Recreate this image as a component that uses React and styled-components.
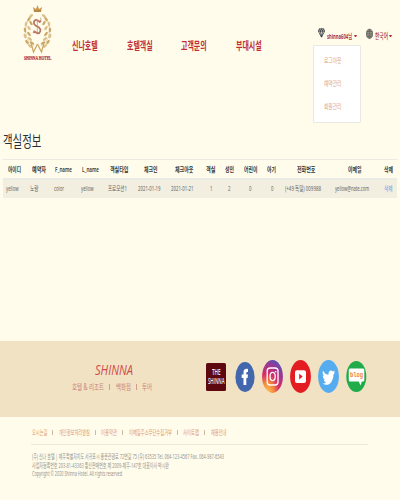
import React, { useLayoutEffect, useRef, useState } from 'react';
import styled, { createGlobalStyle } from 'styled-components';

const GlobalStyle = createGlobalStyle`
  * { box-sizing: border-box; }
  html, body { margin: 0; background: #fffcec; }
  body { font-family: "Noto Sans", "Noto Sans CJK KR", sans-serif; }
`;

const Page = styled.div`
  width: 400px;
  height: 500px;
  overflow: hidden;
  display: flex;
  flex-direction: column;
  background: #fffcec;
`;

/* A label condensed to an exact width. */
const LabelBox = styled.span`
  display: block;
  flex: none;
  width: ${(p) => p.$w}px;
  margin-left: ${(p) => p.$gap || 0}px;
  height: ${(p) => p.$line || p.$size * 1.4}px;
  line-height: ${(p) => p.$line || p.$size * 1.4}px;
  font-size: ${(p) => p.$size}px;
  font-weight: ${(p) => p.$weight || 400};
  color: ${(p) => p.$color || 'inherit'};
  white-space: nowrap;
`;
const LabelText = styled.span`
  display: inline-block;
  transform-origin: 0 50%;
`;

function Label({ w, gap, size, line, weight, color, className, children }) {
  const ref = useRef(null);
  const [scale, setScale] = useState(1);
  useLayoutEffect(() => {
    setScale(w / ref.current.getBoundingClientRect().width);
  }, []);
  return (
    <LabelBox className={className} $w={w} $gap={gap} $size={size} $line={line} $weight={weight} $color={color}>
      <LabelText ref={ref} style={{ transform: `scaleX(${scale})` }}>{children}</LabelText>
    </LabelBox>
  );
}

const Header = styled.header`
  display: flex;
  align-items: flex-start;
  height: 127px;
  flex: none;
`;
const Brand = styled.div`
  width: 51px;
  padding: 4px 0 0 22px;
  display: flex;
  flex-direction: column;
`;
const Crest = styled.svg`
  display: block;
  width: 31px;
  height: 50px;
`;
const BrandName = styled(Label)`
  font-family: "Liberation Serif", serif;
  margin-top: 1px;
  -webkit-text-stroke: 0.2px #ad3040;
`;
const Nav = styled.nav`
  display: flex;
  gap: 29px;
  padding: 38px 0 0 21px;
`;
const Account = styled.div`
  position: relative;
  display: flex;
  align-items: flex-start;
  margin-left: 56px;
  padding-top: 28px;
  color: #a8343c;
`;
const Glyph = styled.svg`
  display: block;
  flex: none;
  width: ${(p) => p.$w}px;
  height: ${(p) => p.$h}px;
  margin-left: ${(p) => p.$gap || 0}px;
`;
const AccountLabel = styled(Label)`
  margin-top: 4px;
`;
const Caret = styled.i`
  width: 3px;
  margin: 7px 0 0 ${(p) => p.$gap}px;
  border: 1.5px solid transparent;
  border-top: 2px solid #b52833;
`;
const Menu = styled.div`
  position: absolute;
  top: 45px;
  left: -5px;
  width: 48px;
  height: 78px;
  padding: 11px 0 0 10px;
  display: flex;
  flex-direction: column;
  gap: 14.2px;
  background: #fff;
  border: 1px solid #e9e8e1;
  border-radius: 1px;
`;

const Title = styled.h1`
  margin: 0;
  height: 32px;
  padding: 3px 0 0 3px;
  flex: none;
`;
const Table = styled.div`
  margin: 0 3px;
  border-top: 1px solid #ecebe3;
`;
const Row = styled.div`
  display: grid;
  grid-template-columns: 23px 25px 26px 27px 31px 33px 33px 19px 20px 22px 19px 47px 51px 18px;
  align-items: center;
  height: ${(p) => (p.$head ? 20 : 18)}px;
  color: ${(p) => (p.$head ? '#33373b' : '#686866')};
  background: ${(p) => (p.$head ? 'transparent' : '#f2eee0')};
  border-bottom: ${(p) => (p.$head ? '2px solid #ebebe5' : '0')};
`;

const Band = styled.section`
  margin-top: 143px;
  height: 76px;
  flex: none;
  display: flex;
  background: #f2e2c4;
`;
const Group = styled.div`
  width: 206px;
  padding: 18px 0 0 72px;
`;
const Script = styled(Label)`
  font-family: "Open Sans", sans-serif;
  font-style: italic;
`;
const Links = styled.div`
  display: flex;
  align-items: center;
  margin-top: ${(p) => p.$top}px;
`;
const Rule = styled.i`
  width: 1px;
  height: ${(p) => p.$h}px;
  margin-left: 5px;
  background: ${(p) => p.$color};
`;
const Socials = styled.div`
  display: flex;
  align-items: center;
  height: 71px;
`;
const Tile = styled.div`
  width: 20px;
  height: 28px;
  padding: 4px 0 0 2px;
  border-radius: 1.5px;
  background: #5d0810;
  color: #f4e8e7;
`;
const TileLabel = styled(Label)`
  font-family: "Open Sans", sans-serif;
`;

const Footer = styled.footer`
  padding: 11px 0 0 31px;
`;
const Divider = styled.hr`
  width: 337px;
  height: 1px;
  margin: 7px 0 8.3px;
  border: 0;
  background: #eceadf;
`;
const Notice = styled.div`
  display: flex;
  flex-direction: column;
`;

const leaves = [
  [7, 15, 35], [4, 20, 10], [3, 26, -5], [3, 32, -20], [5, 38, -35], [8, 42, -50],
  [9, 19, -30], [7, 24, -35], [7, 30, -40], [8, 35, -50], [10, 39, -60], [9, 12, 50],
];

function Wreath() {
  return (
    <g>
      <path d="M9 12C4 17 3 24 4 30C5 37 9 40 12 42" fill="none" stroke="#d6b87e" strokeWidth=".6" />
      {leaves.map(([x, y, a], i) => (
        <ellipse key={i} cx={x} cy={y} rx="1.25" ry="2.5" fill={i % 2 ? '#dcc18d' : '#cda968'} transform={`rotate(${a} ${x} ${y})`} />
      ))}
      <path d="M9 39L11.5 48L15.5 40" fill="none" stroke="#cba564" strokeWidth="1.2" />
    </g>
  );
}

const headCells = [
  ['아이디', 5, 13], ['예약자', 5.5, 14], ['F_name', 4, 17], ['L_name', 4.5, 17], ['객실타입', 5.5, 18.5],
  ['체크인', 9, 13.5], ['체크아웃', 7, 18.5], ['객실', 5, 9.5], ['성인', 5, 9], ['어린이', 4, 13.5],
  ['아기', 5, 9], ['전화번호', 16, 18.5], ['이메일', 20, 13.5], ['삭제', 4.5, 9],
];
const bodyCells = [
  ['yellow', 3, 12.5], ['노랑', 4, 8.5], ['color', 3, 10], ['yellow', 3.5, 12.5], ['프로모션1', 3.5, 19],
  ['2021-01-19', 2.5, 22.5], ['2021-01-21', 3, 22.5], ['1', 8.5, 2.5], ['2', 8, 2.5], ['0', 9.2, 2.5],
  ['0', 8.5, 2.5], ['(+49 독일) 009988', 4, 36], ['yellow@nate.com', 6.5, 34], ['삭제', 4.5, 8.5, '#5f9dec'],
];
const footerLinks = [['오시는길', 15.5], ['개인정보처리방침', 31], ['이용약관', 16], ['이메일주소무단수집거부', 43], ['사이트맵', 16], ['채용안내', 15.5]];

export default function App() {
  return (
    <Page>
      <GlobalStyle />
      <Header>
        <Brand>
          <Crest viewBox="0 0 31 50">
            <Wreath />
            <g transform="translate(31 0) scale(-1 1)"><Wreath /></g>
            <path d="M12 8L11 3L14 5L15.5 1L17 5L20 3L19 8Z" fill="#c99b50" />
            <path d="M12 7H19" stroke="#96682f" strokeWidth=".7" />
            <path d="M18.8 16.5L17.8 18L15 16C11.5 15.5 11 20 13.5 21.5L17 23.5C19.5 25.5 18.5 29.5 15.5 29.3L12.3 27.5L11.5 29" fill="none" stroke="#b77760" strokeWidth="1.7" />
            <path d="M15.3 16V29M18.8 13.5V18" fill="none" stroke="#c28d78" strokeWidth=".7" />
          </Crest>
          <BrandName w={27.5} gap={2} size={5.4} line={7} weight={700} color="#ad3040">SHINNA HOTEL</BrandName>
        </Brand>
        <Nav>
          {['신나호텔', '호텔객실', '고객문의', '부대시설'].map((t) => (
            <Label key={t} w={25.7} size={11} line={15} weight={700} color="#c02c34">{t}</Label>
          ))}
        </Nav>
        <Account>
          <Glyph $w={7} $h={10} viewBox="0 0 7 10">
            <path d="M1.4 .8H5.6L6.6 3.2L3.5 9.2L.4 3.2ZM.4 3.2H6.6M1.4 .8L2.4 3.2L3.5 9L4.6 3.2L5.6 .8M2.4 3.2L3.5 .8L4.6 3.2" fill="none" stroke="#30383e" strokeWidth=".8" />
          </Glyph>
          <AccountLabel w={25} gap={2} size={7.3} line={9.4} weight={700}>shinna604님</AccountLabel>
          <Caret $gap={2.5} />
          <Glyph $w={7} $h={11} $gap={8.5} viewBox="0 0 7 11">
            <ellipse cx="3.5" cy="5.8" rx="3.1" ry="4.6" fill="#aaa99f" stroke="#55564f" strokeWidth=".7" />
            <path d="M3.5 1.3V10.3M.4 5.8H6.6M.9 3.5H6.1M.9 8.1H6.1M3.5 1.3C1.2 4.3 1.2 7.3 3.5 10.3C5.8 7.3 5.8 4.3 3.5 1.3" fill="none" stroke="#55564f" strokeWidth=".6" />
          </Glyph>
          <AccountLabel w={13} gap={2} size={7.5} line={9.4} weight={500}>한국어</AccountLabel>
          <Caret $gap={1} />
          <Menu>
            {['로그아웃', '예약관리', '회원관리'].map((t) => (
              <Label key={t} w={17.5} size={7} line={8.8} color="#dfa579">{t}</Label>
            ))}
          </Menu>
        </Account>
      </Header>

      <Title><Label w={38.5} size={16} color="#262c32">객실정보</Label></Title>
      <Table>
        <Row $head>
          {headCells.map(([t, gap, w], i) => <Label key={i} w={w} gap={gap} size={6.8} line={7} weight={600}>{t}</Label>)}
        </Row>
        <Row>
          {bodyCells.map(([t, gap, w, c], i) => <Label key={i} w={w} gap={gap} size={7} line={8} color={c}>{t}</Label>)}
        </Row>
      </Table>

      <Band>
        <Group>
          <Script w={38} gap={23} size={15} line={20} color="#cf4a4b">SHINNA</Script>
          <Links $top={3}>
            <Label w={32} size={8} line={10.5} color="#c78273">호텔 &amp; 리조트</Label>
            <Rule $h={6} $color="#cf9d89" />
            <Label w={15} gap={5.5} size={8} line={10.5} color="#c78273">백화점</Label>
            <Rule $h={6} $color="#cf9d89" />
            <Label w={10} gap={5} size={8} line={10.5} color="#c78273">투어</Label>
          </Links>
        </Group>
        <Socials>
          <Tile>
            <TileLabel w={8.5} gap={4} size={8} line={9.5} weight={600}>THE</TileLabel>
            <TileLabel w={16.5} size={8} line={9.5} weight={600}>SHINNA</TileLabel>
          </Tile>
          <Glyph $w={20} $h={30} $gap={8.5} viewBox="0 0 20 30">
            <ellipse cx="10" cy="15" rx="9.6" ry="15" fill="#4267ad" />
            <path d="M8.5 23V16H6.7V12.6H8.5V10.5C8.5 7.5 10 6.4 13 7V10C11.5 9.8 11.3 10 11.3 12.6H13L12.6 16H11.3V23Z" fill="#fff" />
          </Glyph>
          <Glyph $w={21} $h={33} $gap={7.5} viewBox="0 0 21 33">
            <defs>
              <radialGradient id="insta" cx=".25" cy="1" r="1.05">
                <stop offset="0" stopColor="#fcc75b" />
                <stop offset=".3" stopColor="#f58a3a" />
                <stop offset=".55" stopColor="#d62e69" />
                <stop offset=".8" stopColor="#a33591" />
                <stop offset="1" stopColor="#5d4eb2" />
              </radialGradient>
            </defs>
            <ellipse cx="10.5" cy="16.5" rx="10.4" ry="16.4" fill="url(#insta)" />
            <rect x="5.2" y="8" width="10.8" height="17" rx="3" fill="none" stroke="#fff" strokeWidth="1.3" />
            <ellipse cx="10.6" cy="16.5" rx="2.6" ry="4.1" fill="none" stroke="#fff" strokeWidth="1.3" />
            <circle cx="13.7" cy="11.7" r=".8" fill="#fff" />
          </Glyph>
          <Glyph $w={21} $h={33} $gap={7} viewBox="0 0 21 33">
            <ellipse cx="10.5" cy="16.5" rx="10.4" ry="16.4" fill="#e31c22" />
            <rect x="5" y="10.3" width="11" height="12.6" rx="2" fill="#fff" />
            <path d="M9.2 13.7L12.7 16.6L9.2 19.5Z" fill="#e31c22" />
          </Glyph>
          <Glyph $w={21} $h={33} $gap={7} viewBox="0 0 21 33">
            <ellipse cx="10.5" cy="16.5" rx="10.4" ry="16.4" fill="#55acee" />
            <path d="M5 10.5C7 14 8.5 14.7 10.5 14.8C10 11 13 9 15 11.5L16.8 10.6L16 12.6L17 12.4L15.5 14.4C15.5 22 10 27.5 4.5 23.5C6 23.7 7 23.2 8 22.3C6.6 22 6 21 5.7 19.6H7C5.4 18.8 4.7 17.5 4.8 15.6L6 16C4.7 14.5 4.3 12.6 5 10.5Z" fill="#fff" />
          </Glyph>
          <Glyph $w={21} $h={31} $gap={7} viewBox="0 0 21 31">
            <ellipse cx="10.3" cy="15.5" rx="10" ry="15.4" fill="#21ac4b" />
            <path d="M4 7.5H17Q18.3 7.5 18.3 9V19Q18.3 20.5 17 20.5H15.8L14.5 24.5L12.8 20.5H4Q2.8 20.5 2.8 19V9Q2.8 7.5 4 7.5Z" fill="#fff" />
            <text x="4" y="16.3" textLength="13" lengthAdjust="spacingAndGlyphs" fontFamily="Liberation Mono, monospace" fontWeight="700" fontSize="7.5" fill="#f07c38">blog</text>
          </Glyph>
        </Socials>
      </Band>

      <Footer>
        <Links $top={0}>
          {footerLinks.map(([t, w], i) => (
            <React.Fragment key={t}>
              {i > 0 && <Rule $h={5} $color="#d2b9a1" />}
              <Label w={w} gap={i ? 5.6 : 0.5} size={6.4} line={9} color="#dd9a6e">{t}</Label>
            </React.Fragment>
          ))}
        </Links>
        <Divider />
        <Notice>
          <Label w={192} gap={0.5} size={6.3} line={8.26} color="#96958f">(주) 신나 호텔 | 제주특별자치도 서귀포시 중문관광로 72번길 75 (우) 63535 Tel. 064-123-4567 Fax. 064-987-6543</Label>
          <Label w={137} gap={0.5} size={6.3} line={8.26} color="#96958f">사업자등록번호 203-81-43363 통신판매번호 제 2009-제주-147호 대표이사 박시완</Label>
          <Label w={90} gap={0.5} size={6.3} line={8.26} color="#96958f">Copyright © 2020 Shinna Hotel. All rights reserved</Label>
        </Notice>
      </Footer>
    </Page>
  );
}
